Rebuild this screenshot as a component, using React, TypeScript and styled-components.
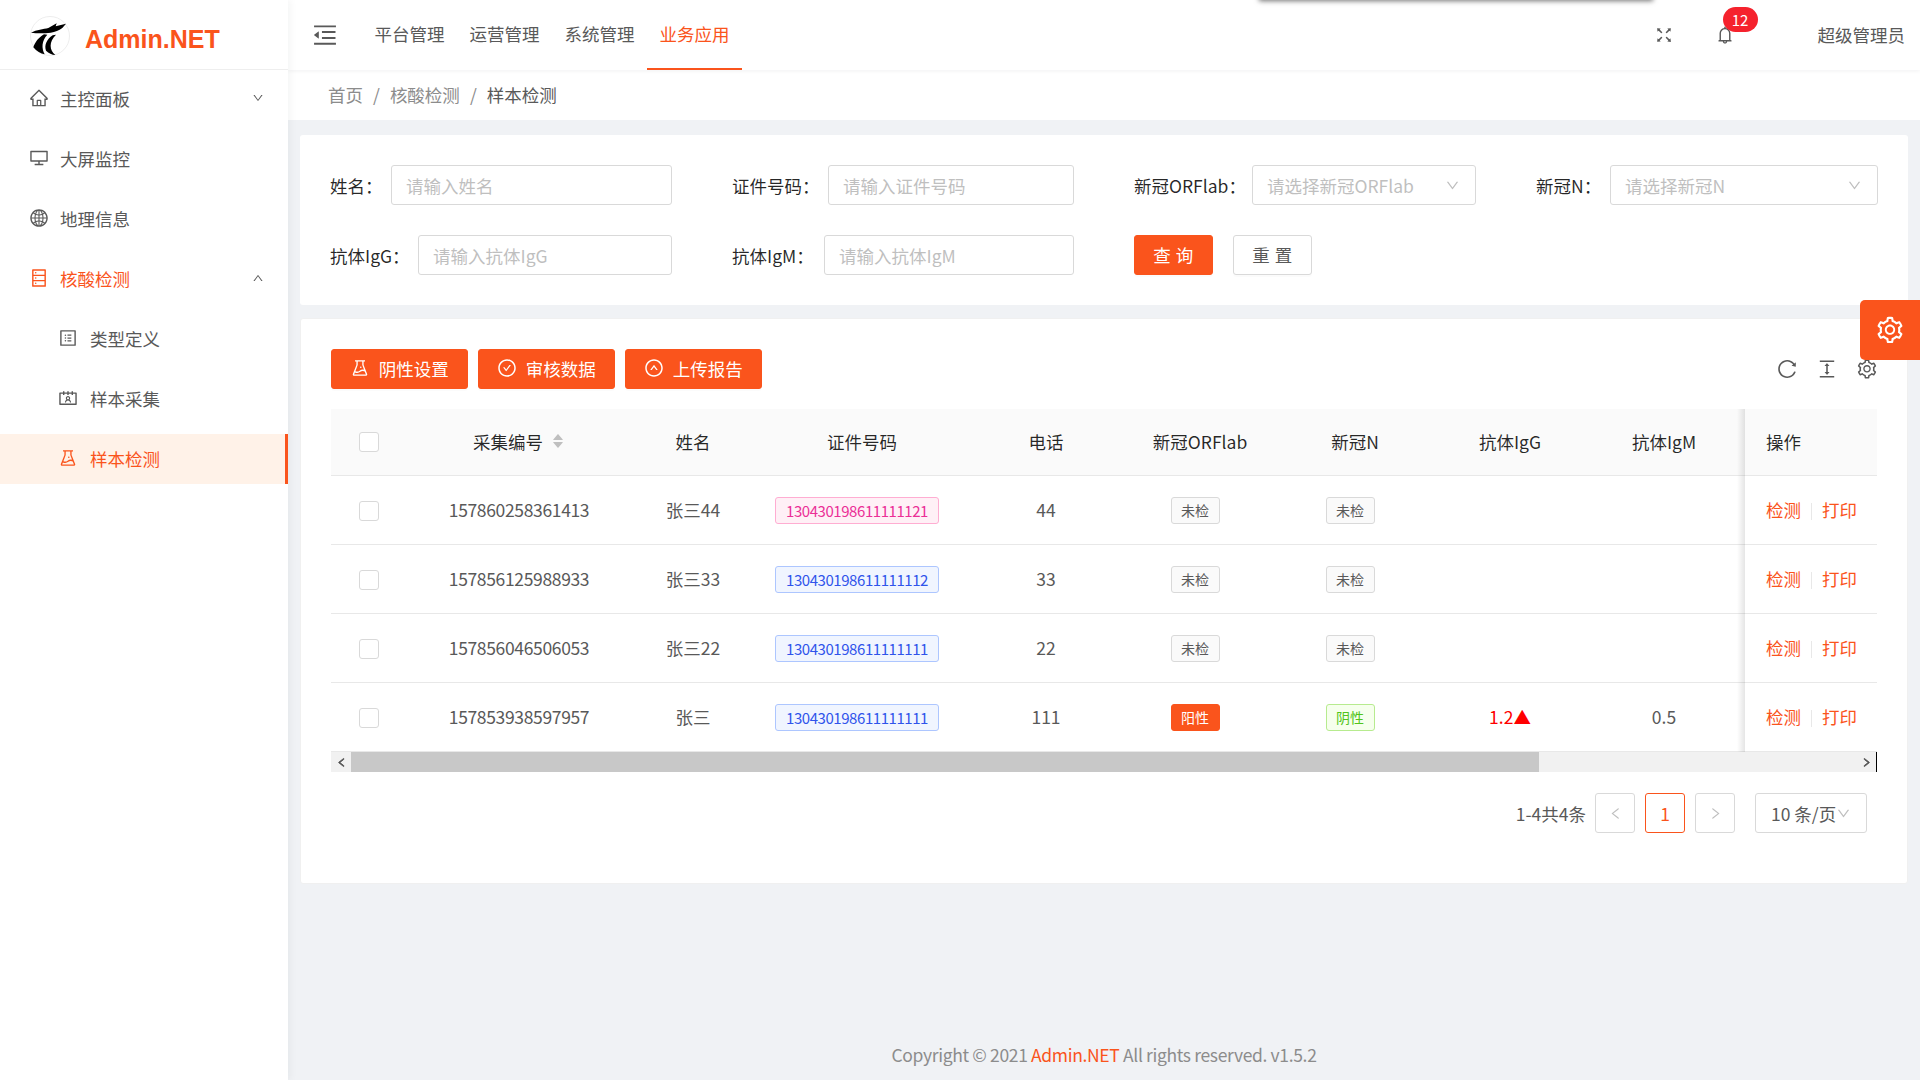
import styled, { createGlobalStyle, css } from "styled-components";
import {
  AiOutlineHome,
  AiOutlineDesktop,
  AiOutlineGlobal,
  AiOutlineDatabase,
  AiOutlineProfile,
  AiOutlineContacts,
  AiOutlineExperiment,
  AiOutlineCheckCircle,
  AiOutlineUpCircle,
  AiOutlineReload,
  AiOutlineColumnHeight,
  AiOutlineSetting,
  AiOutlineFullscreen,
  AiOutlineBell,
  AiOutlineMenuFold,
  AiOutlineDown,
  AiOutlineUp,
  AiOutlineLeft,
  AiOutlineRight,
  AiFillCaretUp,
  AiFillCaretDown,
} from "react-icons/ai";

const PRIMARY = "#fa541c";

const GlobalStyle = createGlobalStyle`
  * {
    box-sizing: border-box;
  }

  html, body {
    margin: 0;
    height: 100%;
    overflow: hidden;
  }

  body {
    font-family: "Noto Sans CJK SC", "Noto Sans", sans-serif;
    font-size: 17.5px;
    color: rgba(0, 0, 0, 0.65);
    background: #f0f2f5;
  }
`;

const Root = styled.div`
  position: relative;
  display: flex;
  width: 1920px;
  height: 1080px;
  overflow: hidden;
`;

const Sider = styled.aside`
  width: 288px;
  flex: none;
  background: #fff;
  box-shadow: 2px 0 8px rgba(29, 35, 41, 0.05);
  z-index: 3;
`;

const LogoBar = styled.div`
  display: flex;
  align-items: center;
  height: 70px;
  padding: 2px 0 0 30px;
  border-bottom: 1px solid #eeeeee;
`;

const LogoTitle = styled.span`
  margin: 7px 0 0 15px;
  font-family: "Liberation Sans", Arial, sans-serif;
  font-size: 25px;
  font-weight: 700;
  color: ${PRIMARY};
`;

const Menu = styled.nav`
  padding-top: 4px;
`;

const MenuItem = styled.div<{ $active?: boolean; $open?: boolean; $sub?: boolean }>`
  display: flex;
  align-items: center;
  height: 50px;
  margin-bottom: 10px;
  padding: 0 24px 2px ${({ $sub }) => ($sub ? 58 : 29)}px;
  color: ${({ $open }) => ($open ? PRIMARY : "#595959")};

  > svg {
    font-size: 20px;
    margin-right: ${({ $sub }) => ($sub ? 12 : 11)}px;
    flex: none;
  }

  ${({ $active }) =>
    $active &&
    css`
      color: ${PRIMARY};
      background: #fff2e8;
      border-right: 3px solid ${PRIMARY};
    `}
`;

const MenuArrow = styled.span`
  margin-left: auto;
  display: flex;
  font-size: 12px;
  color: #595959;
`;

const Main = styled.div`
  flex: 1;
  min-width: 0;
  display: flex;
  flex-direction: column;
`;

const Header = styled.header`
  position: relative;
  display: flex;
  align-items: center;
  height: 70px;
  flex: none;
  background: #fff;
  box-shadow: 0 1px 4px rgba(0, 21, 41, 0.06);
  z-index: 2;
`;

const FoldButton = styled.div`
  display: flex;
  width: 74px;
  padding-left: 23px;
  font-size: 28px;
  color: #595959;
`;

const TopNav = styled.div`
  display: flex;
  height: 100%;
`;

const TopNavItem = styled.div<{ $active?: boolean }>`
  width: 95px;
  display: flex;
  align-items: center;
  justify-content: center;
  padding-bottom: 2px;
  color: ${({ $active }) => ($active ? PRIMARY : "#595959")};
  border-bottom: 2px solid ${({ $active }) => ($active ? PRIMARY : "transparent")};
`;

const PeekShadow = styled.div`
  position: absolute;
  top: -21px;
  left: 971px;
  width: 394px;
  height: 21px;
  background: #fff;
  box-shadow: 0 1px 5px rgba(0, 0, 0, 0.55);
`;

const HeaderRight = styled.div`
  margin-left: auto;
  display: flex;
  align-items: center;
  padding-right: 15px;
`;

const HeaderIcon = styled.div`
  position: relative;
  width: 61px;
  display: flex;
  justify-content: center;
  font-size: 20px;
  color: #595959;
`;

const Badge = styled.span`
  position: absolute;
  top: -18px;
  left: 28px;
  width: 35px;
  height: 25px;
  border-radius: 13px;
  background: #f5222d;
  color: #fff;
  font-size: 15px;
  line-height: 25px;
  text-align: center;
`;

const UserName = styled.span`
  margin: 0 0 2px 62px;
  color: #595959;
`;

const BreadcrumbBar = styled.div`
  display: flex;
  align-items: center;
  height: 50px;
  flex: none;
  padding: 0 0 2px 40px;
  background: #fff;
  color: #8c8c8c;
`;

const BreadcrumbSep = styled.span`
  margin: 0 10px;
`;

const BreadcrumbLast = styled.span`
  color: #595959;
`;

const Content = styled.main`
  flex: 1;
  padding: 15px 12px 0;
  display: flex;
  flex-direction: column;
`;

const SearchCard = styled.section`
  display: grid;
  grid-template-columns: repeat(4, 1fr);
  gap: 30px 60px;
  padding: 30px;
  background: #fff;
  border-radius: 3px;
`;

const FormItem = styled.div`
  display: flex;
  align-items: center;
`;

const FieldLabel = styled.label<{ $w: number }>`
  flex: none;
  width: ${({ $w }) => $w}px;
  color: rgba(0, 0, 0, 0.85);
  white-space: nowrap;
`;

const Field = styled.div`
  flex: 1;
  height: 40px;
  display: flex;
  align-items: center;
  justify-content: space-between;
  padding: 0 15px 0 14px;
  background: #fff;
  border: 1px solid #d9d9d9;
  border-radius: 3px;
  color: #bfbfbf;

  svg {
    font-size: 15px;
  }
`;

const FormButtons = styled.div`
  display: flex;
  gap: 20px;
`;

const Button = styled.button<{ $primary?: boolean }>`
  display: inline-flex;
  align-items: center;
  justify-content: center;
  height: 40px;
  padding: 0 18.25px 2px;
  border-radius: 3px;
  border: 1px solid ${({ $primary }) => ($primary ? PRIMARY : "#d9d9d9")};
  background: ${({ $primary }) => ($primary ? PRIMARY : "#fff")};
  color: ${({ $primary }) => ($primary ? "#fff" : "#595959")};
  box-shadow: 0 2px 0 rgba(0, 0, 0, 0.015);
  font: inherit;

  svg {
    font-size: 20px;
    margin-right: 8.5px;
  }
`;

const FormButton = styled(Button)`
  width: 79px;
  padding: 0 0 2px;
  letter-spacing: 0.5px;
`;

const TableCard = styled.section`
  margin-top: 13px;
  height: 566px;
  padding: 30px;
  background: #fff;
  border: 1px solid #f0f0f0;
  border-radius: 3px;
`;

const Toolbar = styled.div`
  display: flex;
  align-items: center;
  justify-content: space-between;
  height: 40px;
  margin-bottom: 20px;
`;

const ToolGroup = styled.div`
  display: flex;
  gap: 10px;
`;

const ToolIcons = styled.div`
  display: flex;
  align-items: center;
  gap: 18px;
  font-size: 22px;
  color: #595959;
  margin-right: -1px;
`;

const Table = styled.table`
  width: 100%;
  table-layout: fixed;
  border-collapse: separate;
  border-spacing: 0;
`;

const fixedCell = css`
  position: relative;
  padding-left: 21px;

  &::after {
    content: "";
    position: absolute;
    top: 0;
    bottom: -1px;
    left: -8px;
    width: 8px;
    background: linear-gradient(to left, rgba(0, 0, 0, 0.1), rgba(0, 0, 0, 0));
  }
`;

const Th = styled.th<{ $w: number; $fixed?: boolean }>`
  width: ${({ $w }) => $w}px;
  height: 67px;
  padding: 0 0 2px;
  font-weight: 400;
  text-align: ${({ $fixed }) => ($fixed ? "left" : "center")};
  color: rgba(0, 0, 0, 0.85);
  background: #fafafa;
  border-bottom: 1px solid #e8e8e8;

  &:nth-child(9) {
    padding-right: 4px;
  }

  ${({ $fixed }) => $fixed && fixedCell}
`;

const Td = styled.td<{ $fixed?: boolean; $red?: boolean }>`
  height: 69px;
  padding: 0 0 2px;
  text-align: ${({ $fixed }) => ($fixed ? "left" : "center")};
  background: #fff;
  color: ${({ $red }) => ($red ? "#ff0000" : "#595959")};
  border-bottom: 1px solid #e8e8e8;

  &:nth-child(9) {
    padding-right: 4px;
  }

  ${({ $fixed }) => $fixed && fixedCell}
`;

const Serial = styled.span`
  letter-spacing: -0.35px;
`;

const SortHead = styled.span`
  display: inline-flex;
  align-items: center;
  gap: 8px;
`;

const SortCarets = styled.span`
  display: inline-flex;
  flex-direction: column;
  font-size: 14px;
  color: #bfbfbf;

  svg + svg {
    margin-top: -6px;
  }
`;

const Checkbox = styled.span`
  display: block;
  width: 20px;
  height: 20px;
  margin: 2px auto 0;
  background: #fff;
  border: 1px solid #d9d9d9;
  border-radius: 3px;
`;

const RowCheckbox = styled(Checkbox)`
  margin-top: 4px;
`;

const tagColors = {
  pink: ["#fff0f6", "#ffadd2", "#eb2f96"],
  blue: ["#f0f5ff", "#adc6ff", "#2f54eb"],
  gray: ["#fafafa", "#d9d9d9", "#595959"],
  orange: [PRIMARY, PRIMARY, "#fff"],
  green: ["#f6ffed", "#b7eb8f", "#52c41a"],
};

const Tag = styled.span<{ $color: keyof typeof tagColors }>`
  display: inline-block;
  height: 27px;
  margin: 2px 10px 0 0;
  padding: 0 9.5px;
  border-radius: 3px;
  font-size: 14px;
  line-height: 25px;
  vertical-align: middle;
  background: ${({ $color }) => tagColors[$color][0]};
  border: 1px solid ${({ $color }) => tagColors[$color][1]};
  color: ${({ $color }) => tagColors[$color][2]};
`;

const CardTag = styled(Tag)`
  padding: 0 10px;
  font-size: 15px;
  letter-spacing: -0.44px;
`;

const ActionLink = styled.a`
  color: ${PRIMARY};
`;

const ActionDivider = styled.span`
  display: inline-block;
  width: 1px;
  height: 17px;
  margin: 0 10px;
  vertical-align: middle;
  background: #e8e8e8;
`;

const ScrollTrack = styled.div`
  display: flex;
  align-items: center;
  height: 20px;
  background: #f1f1f1;
  border-right: 1px solid #000;
`;

const ScrollArrow = styled.span`
  width: 20px;
  flex: none;
  display: flex;
  justify-content: center;
  color: #505050;
  font-size: 11px;

  &:last-child {
    margin-left: auto;
  }

  svg {
    stroke: currentColor;
    stroke-width: 80;
  }
`;

const ScrollThumb = styled.span`
  width: 1188px;
  height: 100%;
  background: #c8c8c8;
`;

const Pagination = styled.div`
  display: flex;
  align-items: center;
  justify-content: flex-end;
  gap: 10px;
  margin: 21px 10px 0 0;
`;

const PageTotal = styled.span`
  color: #595959;
  margin-right: -1px;
`;

const PageBox = styled.span<{ $active?: boolean }>`
  width: 40px;
  height: 40px;
  display: flex;
  align-items: center;
  justify-content: center;
  border: 1px solid ${({ $active }) => ($active ? PRIMARY : "#d9d9d9")};
  border-radius: 3px;
  color: ${({ $active }) => ($active ? PRIMARY : "#bfbfbf")};
  font-size: ${({ $active }) => ($active ? 17.5 : 15)}px;
`;

const PageSize = styled.span`
  width: 112px;
  height: 40px;
  margin-left: 10px;
  padding-left: 15px;
  display: flex;
  align-items: center;
  white-space: nowrap;
  border: 1px solid #d9d9d9;
  border-radius: 3px;
  color: #595959;

  svg {
    flex: none;
    font-size: 15px;
    color: #bfbfbf;
  }
`;

const Footer = styled.footer`
  margin-top: auto;
  padding-bottom: 13px;
  text-align: center;
  color: #8c8c8c;
  letter-spacing: -0.35px;
`;

const FooterBrand = styled.span`
  color: ${PRIMARY};
`;

const SettingHandle = styled.div`
  position: absolute;
  top: 300px;
  right: 0;
  width: 60px;
  height: 60px;
  display: flex;
  align-items: center;
  justify-content: center;
  background: ${PRIMARY};
  border-radius: 5px 0 0 5px;
  color: #fff;
  font-size: 30px;
  z-index: 4;
`;

const Logo = () => (
  <svg width="40" height="40" viewBox="0 0 120 120">
    <circle cx="60" cy="60" r="58.5" fill="#fff" stroke="#e4e4e4" strokeWidth="2" />
    <path
      d="M3 50C20 41 40 40 55 36L80 22 77 31 108 23 97 36C86 44 76 48 62 50 44 52 24 53 3 50Z"
      fill="#000"
    />
    <path d="M42 55C26 64 14 80 10 94 20 106 32 113 44 115 34 96 35 74 52 56Z" fill="#000" />
    <path d="M68 58C50 70 42 88 48 104 56 112 66 116 76 117 58 102 56 78 78 56Z" fill="#000" />
  </svg>
);

const rows = [
  { id: "157860258361413", name: "张三44", card: "130430198611111121", color: "pink", tel: "44", orf: "未检", n: "未检" },
  { id: "157856125988933", name: "张三33", card: "130430198611111112", color: "blue", tel: "33", orf: "未检", n: "未检" },
  { id: "157856046506053", name: "张三22", card: "130430198611111111", color: "blue", tel: "22", orf: "未检", n: "未检" },
  { id: "157853938597957", name: "张三", card: "130430198611111111", color: "blue", tel: "111", orf: "阳性", n: "阴性", igg: "1.2▲", igm: "0.5" },
] as const;

const resultColor = (v: string) => (v === "阳性" ? "orange" : v === "阴性" ? "green" : "gray");

export default function App() {
  return (
    <Root>
      <GlobalStyle />
      <Sider>
        <LogoBar>
          <Logo />
          <LogoTitle>Admin.NET</LogoTitle>
        </LogoBar>
        <Menu>
          <MenuItem>
            <AiOutlineHome />
            主控面板
            <MenuArrow><AiOutlineDown /></MenuArrow>
          </MenuItem>
          <MenuItem>
            <AiOutlineDesktop />
            大屏监控
          </MenuItem>
          <MenuItem>
            <AiOutlineGlobal />
            地理信息
          </MenuItem>
          <MenuItem $open>
            <AiOutlineDatabase />
            核酸检测
            <MenuArrow><AiOutlineUp /></MenuArrow>
          </MenuItem>
          <MenuItem $sub>
            <AiOutlineProfile />
            类型定义
          </MenuItem>
          <MenuItem $sub>
            <AiOutlineContacts />
            样本采集
          </MenuItem>
          <MenuItem $sub $active>
            <AiOutlineExperiment />
            样本检测
          </MenuItem>
        </Menu>
      </Sider>
      <Main>
        <Header>
          <PeekShadow />
          <FoldButton><AiOutlineMenuFold /></FoldButton>
          <TopNav>
            <TopNavItem>平台管理</TopNavItem>
            <TopNavItem>运营管理</TopNavItem>
            <TopNavItem>系统管理</TopNavItem>
            <TopNavItem $active>业务应用</TopNavItem>
          </TopNav>
          <HeaderRight>
            <HeaderIcon><AiOutlineFullscreen /></HeaderIcon>
            <HeaderIcon>
              <AiOutlineBell />
              <Badge>12</Badge>
            </HeaderIcon>
            <UserName>超级管理员</UserName>
          </HeaderRight>
        </Header>
        <BreadcrumbBar>
          首页
          <BreadcrumbSep>/</BreadcrumbSep>
          核酸检测
          <BreadcrumbSep>/</BreadcrumbSep>
          <BreadcrumbLast>样本检测</BreadcrumbLast>
        </BreadcrumbBar>
        <Content>
          <SearchCard>
            <FormItem>
              <FieldLabel $w={61}>姓名：</FieldLabel>
              <Field>请输入姓名</Field>
            </FormItem>
            <FormItem>
              <FieldLabel $w={96}>证件号码：</FieldLabel>
              <Field>请输入证件号码</Field>
            </FormItem>
            <FormItem>
              <FieldLabel $w={118}>新冠ORFlab：</FieldLabel>
              <Field>请选择新冠ORFlab<AiOutlineDown /></Field>
            </FormItem>
            <FormItem>
              <FieldLabel $w={74}>新冠N：</FieldLabel>
              <Field>请选择新冠N<AiOutlineDown /></Field>
            </FormItem>
            <FormItem>
              <FieldLabel $w={88}>抗体IgG：</FieldLabel>
              <Field>请输入抗体IgG</Field>
            </FormItem>
            <FormItem>
              <FieldLabel $w={92}>抗体IgM：</FieldLabel>
              <Field>请输入抗体IgM</Field>
            </FormItem>
            <FormButtons>
              <FormButton $primary>查 询</FormButton>
              <FormButton>重 置</FormButton>
            </FormButtons>
          </SearchCard>
          <TableCard>
            <Toolbar>
              <ToolGroup>
                <Button $primary><AiOutlineExperiment />阴性设置</Button>
                <Button $primary><AiOutlineCheckCircle />审核数据</Button>
                <Button $primary><AiOutlineUpCircle />上传报告</Button>
              </ToolGroup>
              <ToolIcons>
                <AiOutlineReload />
                <AiOutlineColumnHeight />
                <AiOutlineSetting />
              </ToolIcons>
            </Toolbar>
            <Table>
              <thead>
                <tr>
                  <Th $w={76}><Checkbox /></Th>
                  <Th $w={224}>
                    <SortHead>
                      采集编号
                      <SortCarets><AiFillCaretUp /><AiFillCaretDown /></SortCarets>
                    </SortHead>
                  </Th>
                  <Th $w={124}>姓名</Th>
                  <Th $w={214}>证件号码</Th>
                  <Th $w={154}>电话</Th>
                  <Th $w={154}>新冠ORFlab</Th>
                  <Th $w={156}>新冠N</Th>
                  <Th $w={154}>抗体IgG</Th>
                  <Th $w={158}>抗体IgM</Th>
                  <Th $w={132} $fixed>操作</Th>
                </tr>
              </thead>
              <tbody>
                {rows.map((row) => (
                  <tr key={row.id}>
                    <Td><RowCheckbox /></Td>
                    <Td><Serial>{row.id}</Serial></Td>
                    <Td>{row.name}</Td>
                    <Td><CardTag $color={row.color}>{row.card}</CardTag></Td>
                    <Td>{row.tel}</Td>
                    <Td><Tag $color={resultColor(row.orf)}>{row.orf}</Tag></Td>
                    <Td><Tag $color={resultColor(row.n)}>{row.n}</Tag></Td>
                    <Td $red>{"igg" in row ? row.igg : ""}</Td>
                    <Td>{"igm" in row ? row.igm : ""}</Td>
                    <Td $fixed>
                      <ActionLink>检测</ActionLink>
                      <ActionDivider />
                      <ActionLink>打印</ActionLink>
                    </Td>
                  </tr>
                ))}
              </tbody>
            </Table>
            <ScrollTrack>
              <ScrollArrow><AiOutlineLeft /></ScrollArrow>
              <ScrollThumb />
              <ScrollArrow><AiOutlineRight /></ScrollArrow>
            </ScrollTrack>
            <Pagination>
              <PageTotal>1-4共4条</PageTotal>
              <PageBox><AiOutlineLeft /></PageBox>
              <PageBox $active>1</PageBox>
              <PageBox><AiOutlineRight /></PageBox>
              <PageSize>10 条/页<AiOutlineDown /></PageSize>
            </Pagination>
          </TableCard>
          <Footer>
            Copyright © 2021 <FooterBrand>Admin.NET</FooterBrand> All rights reserved. v1.5.2
          </Footer>
        </Content>
      </Main>
      <SettingHandle><AiOutlineSetting /></SettingHandle>
    </Root>
  );
}
